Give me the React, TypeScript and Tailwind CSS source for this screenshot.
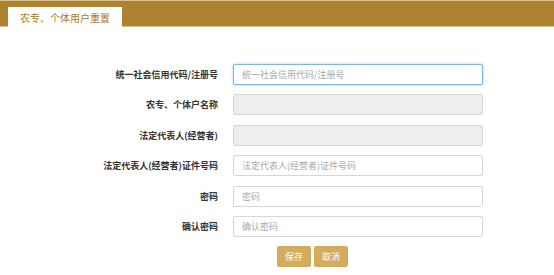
const FIELDS = [
    { label: '统一社会信用代码/注册号', placeholder: '统一社会信用代码/注册号', focused: true },
    { label: '农专、个体户名称', disabled: true },
    { label: '法定代表人(经营者)', disabled: true },
    { label: '法定代表人(经营者)证件号码', placeholder: '法定代表人(经营者)证件号码' },
    { label: '密码', placeholder: '密码' },
    { label: '确认密码', placeholder: '确认密码' },
];

export default function App() {
    return (
        <div
            className="w-[554px] h-[275px] bg-white overflow-hidden"
            style={{ fontFamily: "'Noto Sans CJK SC', 'Noto Sans', sans-serif" }}
        >
            {/* header bar with the single tab */}
            <div className="h-[27px] bg-[#ad8231] border-t border-b border-[#d9c18e] flex items-end pl-[8px]">
                <div className="h-[20px] w-[114px] bg-white -mb-px flex items-center pl-[12px] text-[10px] text-[#a67a2c]">
                    农专、个体用户重置
                </div>
            </div>

            <div className="pt-[37px] flex flex-col gap-[9.4px]">
                {FIELDS.map((f) => (
                    <div key={f.label} className="flex items-center h-[21px]">
                        <div className="w-[218px] text-right text-[9px] font-bold text-[#333] leading-none">
                            {f.label}
                        </div>
                        <input
                            disabled={f.disabled}
                            placeholder={f.placeholder}
                            className={
                                f.focused
                                    ? 'ml-[15px] w-[250px] h-[21px] rounded-[2px] border border-[#7fb6e6] shadow-[0_0_3px_rgba(102,175,233,0.6)] bg-white px-[8px] text-[9px] placeholder:text-[#aaa] outline-none'
                                    : f.disabled
                                    ? 'ml-[15px] w-[250px] h-[21px] rounded-[2px] border border-[#d6d6d6] bg-[#eeeeee] px-[8px] text-[9px] outline-none'
                                    : 'ml-[15px] w-[250px] h-[21px] rounded-[2px] border border-[#d6d6d6] bg-white px-[8px] text-[9px] placeholder:text-[#aaa] outline-none'
                            }
                        />
                    </div>
                ))}

                <div className="flex gap-[3px] pl-[277px]">
                    <button className="w-[34px] h-[21px] rounded-[2px] bg-[#d5ab5d] text-white text-[9px]">保存</button>
                    <button className="w-[34px] h-[21px] rounded-[2px] bg-[#d5ab5d] text-white text-[9px]">取消</button>
                </div>
            </div>
        </div>
    );
}
